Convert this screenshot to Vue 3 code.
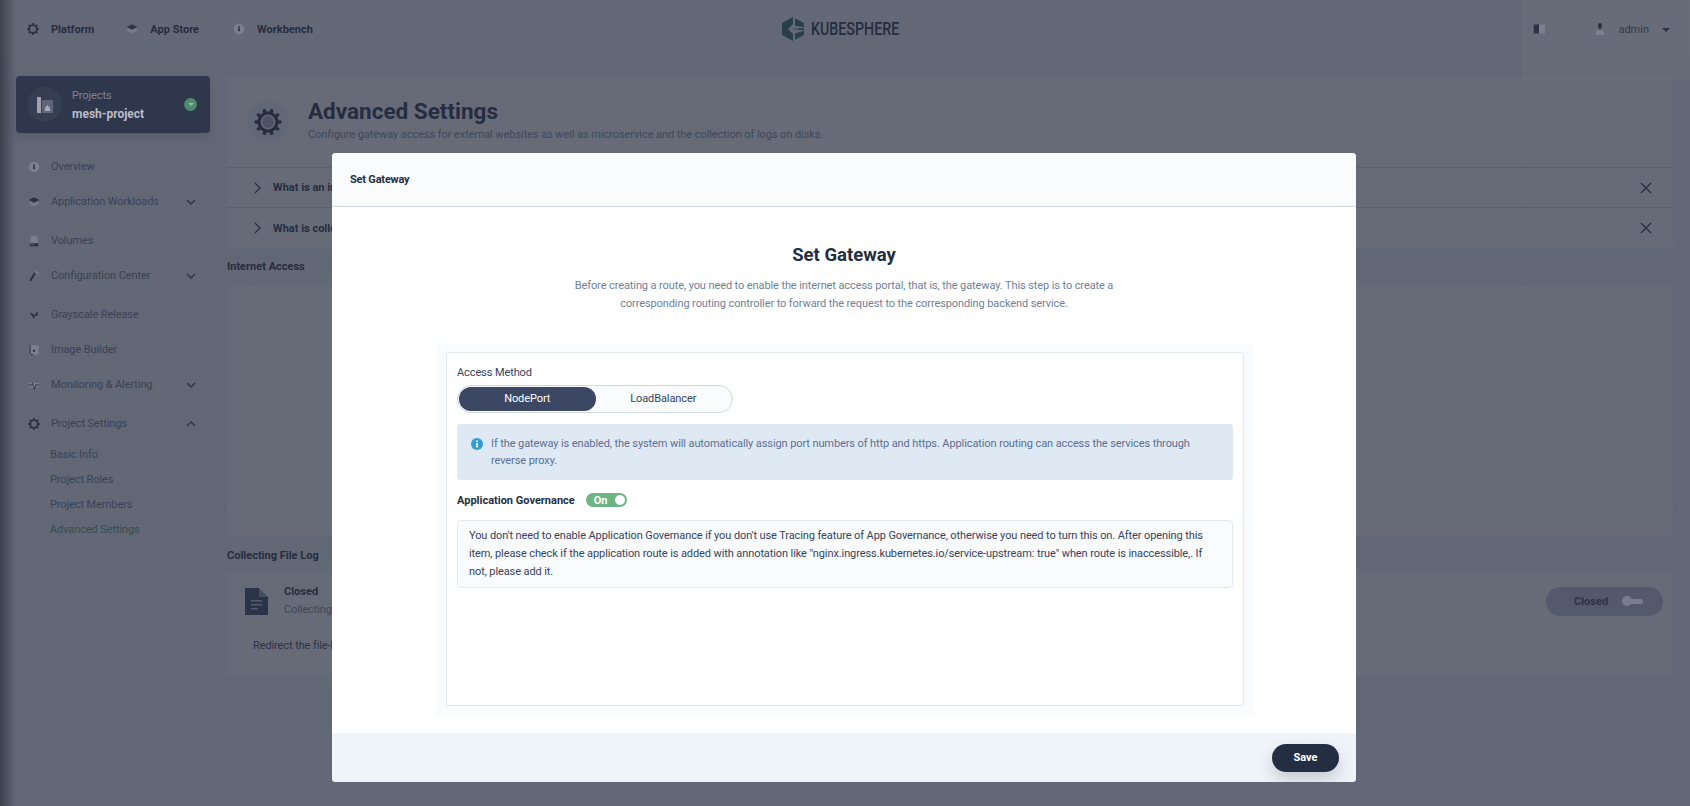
<script setup>
// builds a small cog outline, used for the platform / settings icons
function cog(cx, cy, outer, inner, hole, teeth = 8) {
  let d = ''
  const step = (Math.PI * 2) / teeth
  for (let i = 0; i < teeth; i++) {
    const a = i * step
    const pts = [
      [inner, a - step * 0.5],
      [inner, a - step * 0.27],
      [outer, a - step * 0.17],
      [outer, a + step * 0.17],
      [inner, a + step * 0.27]
    ]
    pts.forEach(([r, t], n) => {
      const x = (cx + r * Math.cos(t)).toFixed(2)
      const y = (cy + r * Math.sin(t)).toFixed(2)
      d += (i === 0 && n === 0 ? 'M' : 'L') + x + ' ' + y + ' '
    })
  }
  d += `Z M${cx - hole} ${cy} a${hole} ${hole} 0 1 0 ${hole * 2} 0 a${hole} ${hole} 0 1 0 ${-hole * 2} 0 Z`
  return d
}

const icons = {
  dash: [
    { d: 'M8 1a7 7 0 1 0 0 14A7 7 0 0 0 8 1z', c: 'light' },
    { d: 'M7.300 4h1.400l.5 5.200a1.300 1.300 0 1 1-2.400 0z', c: 'dark' }
  ],
  stack: [
    { d: 'M8 11.400 2.500 9 1 9.900l7 3.600 7-3.600L13.500 9z', c: 'light' },
    { d: 'M8 9.600 2.500 7.200 1 8l7 3.400L15 8l-1.500-.8z', c: 'light' },
    { d: 'M8 1.800 1 5.200l7 3.400 7-3.400z', c: 'dark' }
  ],
  disk: [
    { d: 'M4 1h8l1.500 10h-11z', c: 'light' },
    { d: 'M2.500 11h11v4h-11zM4 12.400v1h4v-1z', c: 'dark' }
  ],
  hammer: [
    { d: 'M9 1.500h3l3 4-1 .8L11 3.500z', c: 'light' },
    { d: 'M8.200 3 10.200 5 4.400 15 2 13.600z', c: 'dark' }
  ],
  bird: [
    { d: 'M8.500 7.500 14 2.300 12.400 7 14.600 8 9.600 9.300z', c: 'dark' },
    { d: 'M3 4.500 8 7.200 9.200 10.500 7 13 6 9.800 4 8.400z', c: 'dark' }
  ],
  builder: [
    { d: 'M2 1.500h12v13H2z', c: 'light' },
    { d: 'M2 1.500h1.500v13H2zM2 13.200h5v1.300H2zM6.500 8.500 8 6.800l1.500 1.700v1.700h-3z', c: 'dark' }
  ],
  pulse: [
    { d: 'M1 5h14v6H1z', c: 'light' },
    { d: 'M1 7.400h4.200L6.400 4l2 8 1.400-4.600h5.200v1.200h-4.300L8.300 15 6.200 6.800l-.3 1.800H1z', c: 'dark' }
  ],
  gear: [{ d: cog(8, 8, 8, 6.3, 4), c: 'dark' }],
  tag: [
    { d: 'M8 2h8v12H8z', c: 'light' },
    { d: 'M1 2h7v12H1z', c: 'dark' }
  ],
  user: [
    { d: 'M2.500 10h11v6h-11z', c: 'light' },
    { d: 'M8 0a2.600 2.600 0 0 1 2.600 2.600c0 2.200-1 5.400-2.600 5.400S5.400 4.800 5.400 2.600A2.600 2.600 0 0 1 8 0z', c: 'dark' }
  ]
}

const topLinks = [
  { label: 'Platform', icon: 'gear' },
  { label: 'App Store', icon: 'stack' },
  { label: 'Workbench', icon: 'dash' }
]

const navItems = [
  { label: 'Overview', icon: 'dash' },
  { label: 'Application Workloads', icon: 'stack', arrow: 'down' },
  { label: 'Volumes', icon: 'disk' },
  { label: 'Configuration Center', icon: 'hammer', arrow: 'down' },
  { label: 'Grayscale Release', icon: 'bird' },
  { label: 'Image Builder', icon: 'builder' },
  { label: 'Monitoring & Alerting', icon: 'pulse', arrow: 'down' },
  { label: 'Project Settings', icon: 'gear', arrow: 'up' }
]

const subItems = ['Basic Info', 'Project Roles', 'Project Members', 'Advanced Settings']
const bigGear = cog(20, 20, 13.5, 10.5, 7.5, 10)
</script>

<template>
  <div class="page">
    <header class="topbar">
      <nav class="top-links">
        <a v-for="link in topLinks" :key="link.label" class="top-link">
          <svg class="icon" viewBox="0 0 16 16">
            <path v-for="p in icons[link.icon]" :key="p.d" :d="p.d" :class="p.c" fill-rule="evenodd" />
          </svg>
          {{ link.label }}
        </a>
      </nav>
      <div class="logo">
        <svg class="logo-mark" viewBox="0 0 22 24">
          <path d="M11 0v7L6 12l5 5v7L0 18V6z" />
          <path d="M13 1.200 22 6v4.200L13 8.400zM9.500 12 22 11v2.200zM13 16.600l9-2.800V18l-9 4.800z" />
        </svg>
        <span class="logo-text">KUBESPHERE</span>
      </div>
      <div class="top-user">
        <svg class="icon tools" viewBox="0 0 16 16">
          <path v-for="p in icons.tag" :key="p.d" :d="p.d" :class="p.c" />
        </svg>
        <svg class="icon user" viewBox="0 0 16 16">
          <path v-for="p in icons.user" :key="p.d" :d="p.d" :class="p.c" />
        </svg>
        <span class="user-name">admin</span>
        <span class="caret"></span>
      </div>
    </header>

    <div class="layout">
      <aside class="sidebar">
        <div class="project-card">
          <div class="project-icon">
            <svg viewBox="0 0 16 16" width="16" height="16">
              <path d="M0 0h4v16H0z" fill="#a0a4b0" />
              <path d="M5 3h11v13H5z" fill="#5f6678" />
              <path d="M8 11l2.500-3 2.500 3v3H8z" fill="#a8acb8" />
            </svg>
          </div>
          <div class="project-text">
            <div class="project-kind">Projects</div>
            <div class="project-name">mesh-project</div>
          </div>
          <span class="project-switch"><i></i></span>
        </div>

        <ul class="nav">
          <li v-for="item in navItems" :key="item.label" class="nav-item" :class="{ expandable: item.arrow }">
            <svg class="icon" viewBox="0 0 16 16">
              <path v-for="p in icons[item.icon]" :key="p.d" :d="p.d" :class="p.c" fill-rule="evenodd" />
            </svg>
            <span class="nav-label">{{ item.label }}</span>
            <svg v-if="item.arrow" class="chevron" :class="item.arrow" viewBox="0 0 10 6">
              <path d="M1 1l4 4 4-4" />
            </svg>
          </li>
        </ul>
        <ul class="subnav">
          <li v-for="(sub, i) in subItems" :key="sub" :class="{ active: i === 3 }">{{ sub }}</li>
        </ul>
      </aside>

      <main class="content">
        <section class="banner-card">
          <div class="banner">
            <div class="banner-icon">
              <svg viewBox="0 0 40 40" width="40" height="40">
                <path :d="bigGear" class="gear-ring" fill-rule="evenodd" />
                <circle cx="20" cy="20" r="6" class="gear-core" />
              </svg>
            </div>
            <div>
              <h1>Advanced Settings</h1>
              <p>Configure gateway access for external websites as well as microservice and the collection of logs on disks.</p>
            </div>
          </div>
          <div class="faq">
            <svg class="faq-arrow" viewBox="0 0 8 12"><path d="M1 1l5 5-5 5" /></svg>
            <b class="faq-title">What is an internet access gateway?</b>
            <svg class="faq-close" viewBox="0 0 12 12"><path d="M1 1l10 10M11 1L1 11" /></svg>
          </div>
          <div class="faq">
            <svg class="faq-arrow" viewBox="0 0 8 12"><path d="M1 1l5 5-5 5" /></svg>
            <b class="faq-title">What is collecting file logs on disks?</b>
            <svg class="faq-close" viewBox="0 0 12 12"><path d="M1 1l10 10M11 1L1 11" /></svg>
          </div>
        </section>

        <h2 class="access-title">Internet Access</h2>
        <section class="access-card"></section>

        <h2 class="log-title">Collecting File Log</h2>
        <section class="log-card">
          <div class="log-head">
            <svg class="log-doc" viewBox="0 0 23 27">
              <path d="M0 0h14v9h9v18H0z" fill="#36435c" />
              <path d="M14 0l9 9h-9z" fill="#8d99ac" />
              <path d="M6 12h11v1.500H6zM6 16h11v1.500H6zM6 20h7v1.500H6z" fill="#c1c9d1" />
            </svg>
            <div class="log-text">
              <b>Closed</b>
              <span>Collecting file logs on disks is not enabled</span>
            </div>
            <div class="log-toggle">
              <span>Closed</span>
              <i class="key"></i>
            </div>
          </div>
          <p class="log-desc">Redirect the file-based logs to standard output for collection.</p>
        </section>
      </main>
    </div>

    <div class="overlay">
      <div class="modal">
        <div class="modal-head">Set Gateway</div>
        <div class="modal-body">
          <h3>Set Gateway</h3>
          <p class="intro">
            Before creating a route, you need to enable the internet access portal, that is, the gateway. This step is to create a<br />
            corresponding routing controller to forward the request to the corresponding backend service.
          </p>
          <div class="form-shell">
            <div class="form-box">
              <div class="form-label">Access Method</div>
              <div class="tabs">
                <span class="tab selected">NodePort</span>
                <span class="tab">LoadBalancer</span>
              </div>
              <div class="alert">
                <svg class="alert-icon" viewBox="0 0 12 12">
                  <circle cx="6" cy="6" r="6" fill="#329dce" />
                  <rect x="5.200" y="5" width="1.600" height="4.500" fill="#fff" />
                  <rect x="5.200" y="2.500" width="1.600" height="1.600" fill="#fff" />
                </svg>
                <span>If the gateway is enabled, the system will automatically assign port numbers of http and https. Application routing can access the services through reverse proxy.</span>
              </div>
              <div class="gov-row">
                <b>Application Governance</b>
                <span class="switch">On<i></i></span>
              </div>
              <div class="note">
                You don't need to enable Application Governance if you don't use Tracing feature of App Governance, otherwise you need to turn this on. After opening this item, please check if the application route is added with annotation like "nginx.ingress.kubernetes.io/service-upstream: true" when route is inaccessible,. If not, please add it.
              </div>
            </div>
          </div>
        </div>
        <div class="modal-foot">
          <button class="save">Save</button>
        </div>
      </div>
      <div class="corner-tint"></div>
    </div>
  </div>
</template>

<style>
html,
body {
  margin: 0;
  overflow: hidden;
}
</style>

<style scoped>
.page {
  position: relative;
  width: 1690px;
  height: 806px;
  overflow: hidden;
  background: #f0f4f8;
  font-family: Roboto, "Liberation Sans", sans-serif;
  font-size: 11px;
  letter-spacing: -0.1px;
  color: #242e42;
}

b,
h1,
h2,
h3 {
  letter-spacing: 0;
}

/* icons sit above the dim layer, their colours are the dimmed ones */
.icon {
  position: relative;
  z-index: 1;
  width: 12px;
  height: 12px;
  flex: none;
}

.dark {
  fill: #2c3242;
}

.light {
  fill: #7a8092;
}

.topbar {
  position: relative;
  display: flex;
  align-items: center;
  height: 58px;
  padding: 0 20px 0 27px;
  background: #f5f7fa;
}

.top-links {
  display: flex;
  flex: 1;
  gap: 32px;
}

.top-link {
  display: flex;
  align-items: center;
  gap: 12px;
  font-weight: 700;
  letter-spacing: 0;
  color: #242e42;
}

.top-link:last-child {
  margin-left: 2px;
}

.logo {
  position: absolute;
  left: 782px;
  top: 17px;
  display: flex;
  align-items: center;
  gap: 7px;
}

.logo-mark {
  width: 22px;
  height: 24px;
  fill: #2e6e5e;
}

.logo-text {
  display: inline-block;
  width: 90px;
  font-size: 19px;
  font-weight: 500;
  line-height: 24px;
  letter-spacing: 0;
  color: #242e42;
  white-space: nowrap;
  transform: scaleX(0.75);
  transform-origin: left center;
}

.top-user {
  display: flex;
  align-items: center;
  color: #36435c;
}

.top-user .tools {
  margin-right: 49px;
}

.top-user .user {
  margin-right: 12px;
}

.user-name {
  margin-right: 13px;
  letter-spacing: 0;
}

.caret {
  width: 0;
  height: 0;
  margin-top: 2px;
  border: 4px solid transparent;
  border-top: 4px solid #242e42;
  border-bottom: 0;
}

.layout {
  display: flex;
  padding-top: 18px;
}

.sidebar {
  flex: none;
  width: 227px;
  box-sizing: border-box;
  padding-left: 16px;
}

.project-card {
  display: flex;
  align-items: center;
  width: 194px;
  height: 57px;
  box-sizing: border-box;
  padding: 0 13px 0 11px;
  border-radius: 4px;
  background: #445170;
  box-shadow: 0 4px 8px rgba(36, 46, 66, 0.2);
}

.project-icon {
  position: relative;
  z-index: 1;
  display: flex;
  align-items: center;
  justify-content: center;
  width: 35px;
  height: 35px;
  border-radius: 50%;
  background: #363e52;
}

.project-text {
  position: relative;
  z-index: 1;
  flex: 1;
  margin-left: 10px;
  line-height: 18px;
}

.project-kind {
  color: #7d8293;
}

.project-name {
  font-size: 12px;
  font-weight: 700;
  letter-spacing: 0;
  color: #b9bdc7;
}

.project-switch {
  position: relative;
  z-index: 1;
  display: flex;
  align-items: center;
  justify-content: center;
  width: 13px;
  height: 13px;
  border-radius: 50%;
  background: #4f8a6f;
}

.project-switch i {
  width: 0;
  height: 0;
  border: 3px solid transparent;
  border-top: 3px solid #a8acb8;
  border-bottom: 0;
}

.nav {
  margin: 16px 0 0;
  padding: 0;
  list-style: none;
}

.nav-item {
  display: flex;
  align-items: center;
  height: 35px;
  padding-left: 12px;
  color: #66748c;
}

.nav-item.expandable {
  margin-bottom: 4px;
}

.nav-item .icon {
  margin-right: 11px;
}

.nav-label {
  flex: 1;
}

.chevron {
  width: 10px;
  height: 6px;
  margin-right: 31px;
  fill: none;
  stroke: #36435c;
  stroke-width: 1.400;
}

.chevron.up {
  transform: rotate(180deg);
}

.subnav {
  margin: -3px 0 0;
  padding: 0 0 0 34px;
  list-style: none;
  color: #66748c;
}

.subnav li {
  height: 25px;
  line-height: 25px;
}

.subnav .active {
  color: #4fa07c;
}

.content {
  flex: none;
  width: 1446px;
}

.banner-card {
  border-radius: 4px;
  background: #fff;
}

.banner {
  display: flex;
  align-items: center;
  height: 92px;
  box-sizing: border-box;
  padding: 0 0 0 20px;
  border-bottom: 1px solid #d8dee5;
}

.banner-icon {
  display: flex;
  align-items: center;
  justify-content: center;
  width: 42px;
  height: 42px;
  margin-right: 19px;
  border-radius: 50%;
  background: #eef1f5;
}

.gear-ring {
  fill: #242e42;
}

.gear-core {
  fill: #a5aebc;
}

.banner h1 {
  margin: 0;
  padding-top: 3px;
  font-size: 22.500px;
  line-height: 26px;
  font-weight: 700;
  color: #242e42;
}

.banner p {
  margin: 2px 0 4px;
  line-height: 18px;
  letter-spacing: -0.07px;
  color: #79879c;
}

.faq {
  display: flex;
  align-items: center;
  height: 40px;
  padding: 0 21px 0 27px;
  border-bottom: 1px solid #d8dee5;
  box-sizing: border-box;
}

.faq:last-child {
  border-bottom: 0;
}

.faq-title {
  margin: 0 auto 0 11px;
  white-space: nowrap;
  color: #242e42;
}

.faq-arrow {
  width: 8px;
  height: 12px;
  fill: none;
  stroke: #242e42;
  stroke-width: 1.200;
}

.faq-close {
  width: 12px;
  height: 12px;
  fill: none;
  stroke: #242e42;
  stroke-width: 1.200;
}

.access-title,
.log-title {
  margin: 0;
  font-size: 11px;
  font-weight: 700;
  line-height: 18px;
  color: #242e42;
}

.access-title {
  margin-top: 10px;
}

.access-card {
  height: 251px;
  margin-top: 10px;
  border-radius: 4px;
  background: #fff;
}

.log-title {
  margin-top: 10px;
}

.log-card {
  height: 103px;
  box-sizing: border-box;
  margin-top: 8px;
  padding: 10px 10px 0 18px;
  border-radius: 4px;
  background: #fff;
}

.log-head {
  display: flex;
  align-items: center;
}

.log-doc {
  width: 23px;
  height: 27px;
  margin-right: 16px;
}

.log-text {
  flex: 1;
  display: flex;
  flex-direction: column;
  line-height: 18px;
  color: #79879c;
}

.log-text b {
  color: #242e42;
}

.log-toggle {
  display: flex;
  align-items: center;
  width: 117px;
  height: 29px;
  box-sizing: border-box;
  padding-left: 28px;
  border-radius: 15px;
  background: #bfc3d5;
  font-weight: 700;
  letter-spacing: 0;
  color: #36435c;
}

.key {
  position: relative;
  z-index: 1;
  width: 20px;
  height: 5px;
  margin-left: 15px;
  border-radius: 3px;
  background: #797d8e;
}

.key::before {
  content: "";
  position: absolute;
  left: -1px;
  top: -2.500px;
  width: 10px;
  height: 10px;
  border-radius: 50%;
  background: #797d8e;
}

.log-desc {
  margin: 20px 0 0 8px;
  color: #36435c;
}

.overlay {
  position: absolute;
  inset: 0;
  display: flex;
  justify-content: center;
  padding: 153px 2px 0 0;
  box-sizing: border-box;
  background: linear-gradient(90deg, rgba(20, 26, 40, 0.82) 0, rgba(38, 44, 62, 0.7) 16px);
}

.corner-tint {
  position: absolute;
  top: 0;
  right: 0;
  width: 168px;
  height: 80px;
  background: rgba(255, 235, 190, 0.03);
}

.modal {
  display: flex;
  flex-direction: column;
  width: 1024px;
  height: 629px;
  overflow: hidden;
  border-radius: 4px;
  background: #fff;
}

.modal-head {
  flex: none;
  height: 54px;
  box-sizing: border-box;
  padding-left: 18px;
  border-bottom: 1px solid #d1d7df;
  background: #f9fbfd;
  font-weight: 700;
  letter-spacing: -0.200px;
  line-height: 53px;
  color: #242e42;
}

.modal-body {
  flex: 1;
  padding: 35px 0 0;
}

.modal-body h3 {
  margin: 0;
  font-size: 18.500px;
  line-height: 26px;
  font-weight: 700;
  text-align: center;
  color: #242e42;
}

.intro {
  margin: 9px 0 0;
  line-height: 18px;
  text-align: center;
  color: #6f7f99;
}

.form-shell {
  width: 818px;
  height: 373px;
  box-sizing: border-box;
  margin: 30px 0 0 104px;
  padding: 9px 10px 10px;
  background: #f9fbfd;
}

.form-box {
  height: 100%;
  box-sizing: border-box;
  padding: 11px 10px 10px;
  border: 1px solid #e3e9ef;
  border-radius: 2px;
  background: #fff;
}

.form-label {
  line-height: 18px;
  color: #36435c;
}

.tabs {
  display: flex;
  width: 276px;
  height: 28px;
  box-sizing: border-box;
  margin-top: 3px;
  padding: 1px;
  border: 1px solid #d1d7df;
  border-radius: 14px;
  background: #f9fbfd;
}

.tab {
  width: 137px;
  line-height: 24px;
  text-align: center;
  color: #36435c;
}

.tab.selected {
  width: 138px;
  border-radius: 12px;
  background: #3b4763;
  color: #fff;
}

.alert {
  display: flex;
  margin-top: 11px;
  padding: 11px 14px;
  border-radius: 4px;
  background: #dfe9f4;
  line-height: 17px;
  color: #5a6f93;
}

.alert-icon {
  flex: none;
  width: 12px;
  height: 12px;
  margin: 3px 8px 0 0;
}

.gov-row {
  display: flex;
  align-items: center;
  height: 14px;
  margin-top: 13px;
}

.gov-row b {
  color: #242e42;
}

.switch {
  display: flex;
  align-items: center;
  justify-content: space-between;
  width: 41px;
  height: 14px;
  box-sizing: border-box;
  margin-left: 11px;
  padding: 0 2px 0 8px;
  border-radius: 7px;
  background: #6db585;
  font-weight: 700;
  color: #fff;
}

.switch i {
  width: 10px;
  height: 10px;
  border-radius: 50%;
  background: #fff;
}

.note {
  margin-top: 13px;
  padding: 6px 11px;
  border: 1px solid #e3e9ef;
  border-radius: 4px;
  background: #f9fbfd;
  line-height: 18px;
  color: #36435c;
}

.modal-foot {
  flex: none;
  display: flex;
  align-items: center;
  justify-content: flex-end;
  height: 49px;
  padding-right: 17px;
  background: #eff4f9;
}

.save {
  width: 67px;
  height: 28px;
  padding: 0;
  border: 0;
  border-radius: 14px;
  background: #242e42;
  box-shadow: 0 8px 16px rgba(36, 46, 66, 0.2);
  font-family: inherit;
  font-size: 11px;
  font-weight: 700;
  color: #fff;
}
</style>
